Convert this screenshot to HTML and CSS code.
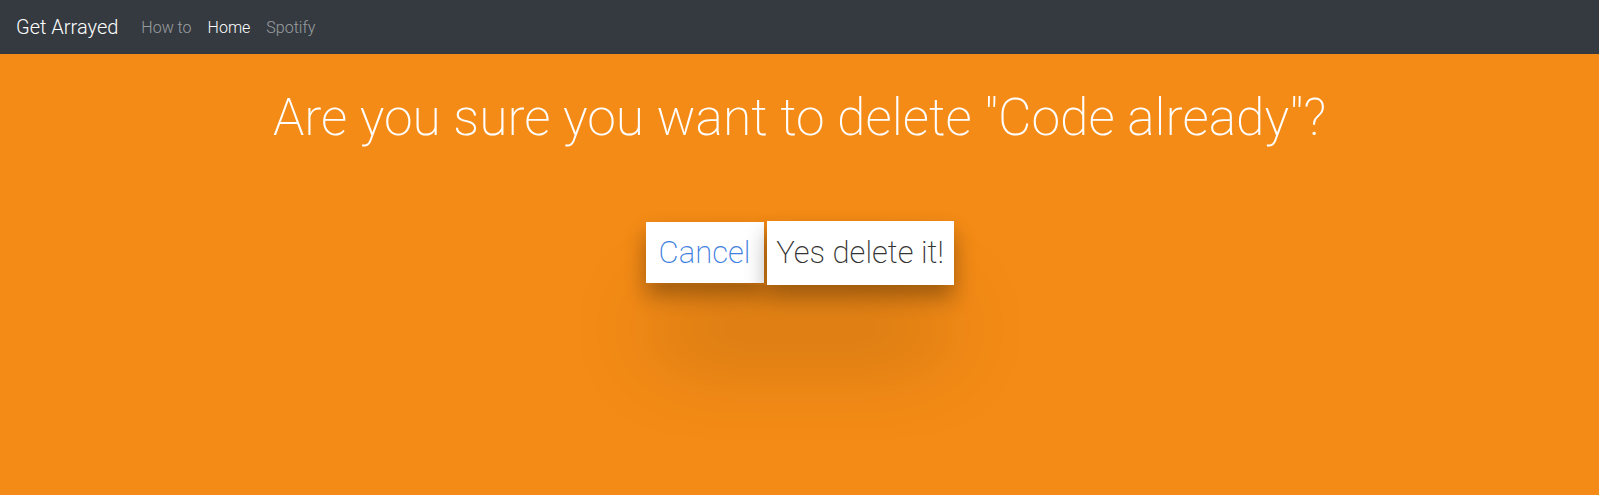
FILE: index.html
```html
<!DOCTYPE html>
<html>
<head>
<meta charset="utf-8">
<link rel="stylesheet" href="styles.css">
</head>
<body>
<nav class="navbar">
  <a class="brand" href="#">Get Arrayed</a>
  <ul class="nav">
    <li><a class="nav-link" href="#">How to</a></li>
    <li><a class="nav-link active" href="#">Home</a></li>
    <li><a class="nav-link" href="#">Spotify</a></li>
  </ul>
</nav>
<main class="page">
  <h1 class="title">Are you sure you want to delete "Code already"?</h1>
  <div class="actions">
    <a class="btn btn-cancel" href="#">Cancel</a>
    <button class="btn btn-yes" type="button">Yes delete it!</button>
  </div>
</main>
</body>
</html>
```
FILE: styles.css
```css
html, body {
  margin: 0;
  padding: 0;
  height: 100%;
}
body {
  font-family: Roboto, "Liberation Sans", sans-serif;
  background: #f48b16;
  overflow: hidden;
}
.navbar {
  height: 54px;
  background: #343a40;
  display: flex;
  align-items: center;
  padding: 0 16px;
  box-sizing: border-box;
}
.brand {
  color: #fff;
  font-size: 20px;
  font-weight: 300;
  text-decoration: none;
  margin-right: 23px;
}
.nav {
  display: flex;
  list-style: none;
  margin: 0;
  padding: 0;
  gap: 16px;
}
.nav-link {
  color: rgba(255,255,255,.5);
  font-size: 16px;
  font-weight: 300;
  text-decoration: none;
}
.nav-link.active {
  color: #fff;
}
.page {
  display: flex;
  flex-direction: column;
  align-items: center;
}
.title {
  margin: 33px 0 0;
  color: #fff;
  font-size: 51.6px;
  font-weight: 200;
  line-height: 1.2;
}
.actions {
  margin-top: 72px;
  display: flex;
  align-items: center;
  gap: 3px;
  box-shadow: 0 75px 90px -10px rgba(0,0,0,.22);
}
.btn {
  background: #fff;
  border: none;
  font-family: inherit;
  font-weight: 200;
  font-size: 31px;
  text-decoration: none;
  box-sizing: border-box;
  display: flex;
  align-items: center;
  justify-content: center;
  box-shadow: 0 12px 22px rgba(0,0,0,.33);
}
.btn-cancel {
  color: #3f7fe0;
  width: 118px;
  height: 61px;
}
.btn-yes {
  color: #333;
  width: 187px;
  height: 64px;
  padding: 0;
}
```
